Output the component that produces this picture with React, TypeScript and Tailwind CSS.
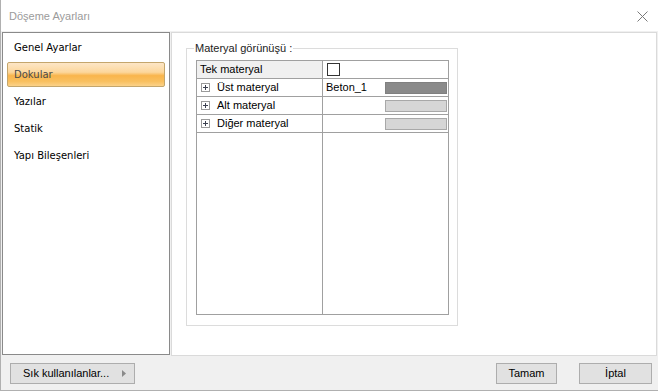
import React from 'react';

const menuItems = ['Genel Ayarlar', 'Dokular', 'Yazılar', 'Statik', 'Yapı Bileşenleri'];

type Row = { label: string; value?: string; swatch: 'dark' | 'light' };

const rows: Row[] = [
  { label: 'Üst materyal', value: 'Beton_1', swatch: 'dark' },
  { label: 'Alt materyal', swatch: 'light' },
  { label: 'Diğer materyal', swatch: 'light' },
];

function PlusBox() {
  return (
    <span className="flex items-center justify-center w-[9px] h-[9px] border border-[#9a9a9a] bg-white shrink-0">
      <svg width="7" height="7" viewBox="0 0 7 7">
        <path d="M1 3.5h5M3.5 1v5" stroke="#3c4150" strokeWidth="1" />
      </svg>
    </span>
  );
}

export default function App() {
  const font = { fontFamily: '"Liberation Sans", Arial, sans-serif' };
  const menuFont = { fontFamily: '"DejaVu Sans", Verdana, sans-serif' };

  return (
    <div
      className="w-[658px] h-[391px] flex flex-col bg-[#f0f0f0] border-l border-b border-[#b0b0b0] text-[11px] text-black overflow-hidden"
      style={font}
    >
      {/* title bar */}
      <div className="h-[31px] bg-white flex items-center justify-between pl-[8px] pr-[10px] pt-[1px] shrink-0">
        <span className="text-[11px] text-[#9b9b9b]">Döşeme Ayarları</span>
        <svg width="11" height="11" viewBox="0 0 11 11">
          <path d="M0.5 0.5L10.5 10.5M10.5 0.5L0.5 10.5" stroke="#7a7a7a" strokeWidth="1" />
        </svg>
      </div>

      {/* body */}
      <div className="flex pt-[1px]">
        <div
          className="ml-[1px] w-[168px] h-[323px] bg-white border border-[#8a8a8a] pt-[2px] px-[4px] flex flex-col gap-[2px] text-[10px]"
          style={menuFont}
        >
          {menuItems.map(item =>
            item === 'Dokular' ? (
              <div
                key={item}
                className="h-[25px] flex items-center pl-[6px] border border-[#c4a66c] rounded-[2px] text-[#4b4b4b] bg-[linear-gradient(to_bottom,#fde6c6_0%,#fcd79c_40%,#f9b54c_55%,#f9c060_80%,#fbd28a_100%)]"
              >
                {item}
              </div>
            ) : (
              <div key={item} className="h-[25px] flex items-center pl-[7px] text-black">
                {item}
              </div>
            )
          )}
        </div>

        <div className="ml-[1px] mr-[1px] flex-1 h-[324px] bg-white border border-[#dadada]">
          <fieldset className="ml-[14px] mt-[9px] w-[272px] h-[284px] border border-[#dcdcdc] pl-[9px]">
            <legend className="px-[1px] -ml-[2px] leading-[13px] text-[#222]">Materyal görünüşü :</legend>
            <div className="mt-[5px] w-[253px] h-[255px] border border-[#a0a0a0] flex flex-col">
              <div className="flex h-[18px] border-b border-[#a0a0a0]">
                <div className="w-[126px] border-r border-[#a0a0a0] bg-[#f0f0f0] flex items-center pl-[3px]">
                  Tek materyal
                </div>
                <div className="flex-1 flex items-center pl-[4px]">
                  <span className="w-[13px] h-[13px] border border-[#333] bg-white" />
                </div>
              </div>
              {rows.map(r => (
                <div key={r.label} className="flex h-[18px] border-b border-[#a0a0a0]">
                  <div className="w-[126px] border-r border-[#a0a0a0] flex items-center pl-[4px] gap-[7px]">
                    <PlusBox />
                    <span>{r.label}</span>
                  </div>
                  <div className="flex-1 flex items-center pl-[3px] pr-[1px]">
                    <span className="flex-1">{r.value ?? ''}</span>
                    {r.swatch === 'dark' ? (
                      <span className="w-[62px] h-[12px] bg-[#8a8a8a] border border-[#808080]" />
                    ) : (
                      <span className="w-[62px] h-[12px] bg-[#d6d6d6] border border-[#a8a8a8]" />
                    )}
                  </div>
                </div>
              ))}
              <div className="flex-1 flex">
                <div className="w-[126px] border-r border-[#a0a0a0]" />
              </div>
            </div>
          </fieldset>
        </div>
      </div>

      {/* bottom buttons */}
      <div className="flex items-start pt-[7px] pl-[9px] pr-[6px]">
        <button className="w-[125px] h-[21px] bg-[#e1e1e1] border border-[#adadad] flex items-center justify-between pl-[12px] pr-[8px]">
          <span>Sık kullanılanlar...</span>
          <svg width="4" height="7" viewBox="0 0 4 7">
            <path d="M0 0L4 3.5L0 7Z" fill="#8a8a8a" />
          </svg>
        </button>
        <div className="flex-1" />
        <button className="w-[61px] h-[21px] bg-[#e1e1e1] border border-[#adadad] flex items-center justify-center">
          Tamam
        </button>
        <button className="ml-[22px] w-[73px] h-[21px] bg-[#e1e1e1] border border-[#adadad] flex items-center justify-center">
          İptal
        </button>
      </div>
    </div>
  );
}
